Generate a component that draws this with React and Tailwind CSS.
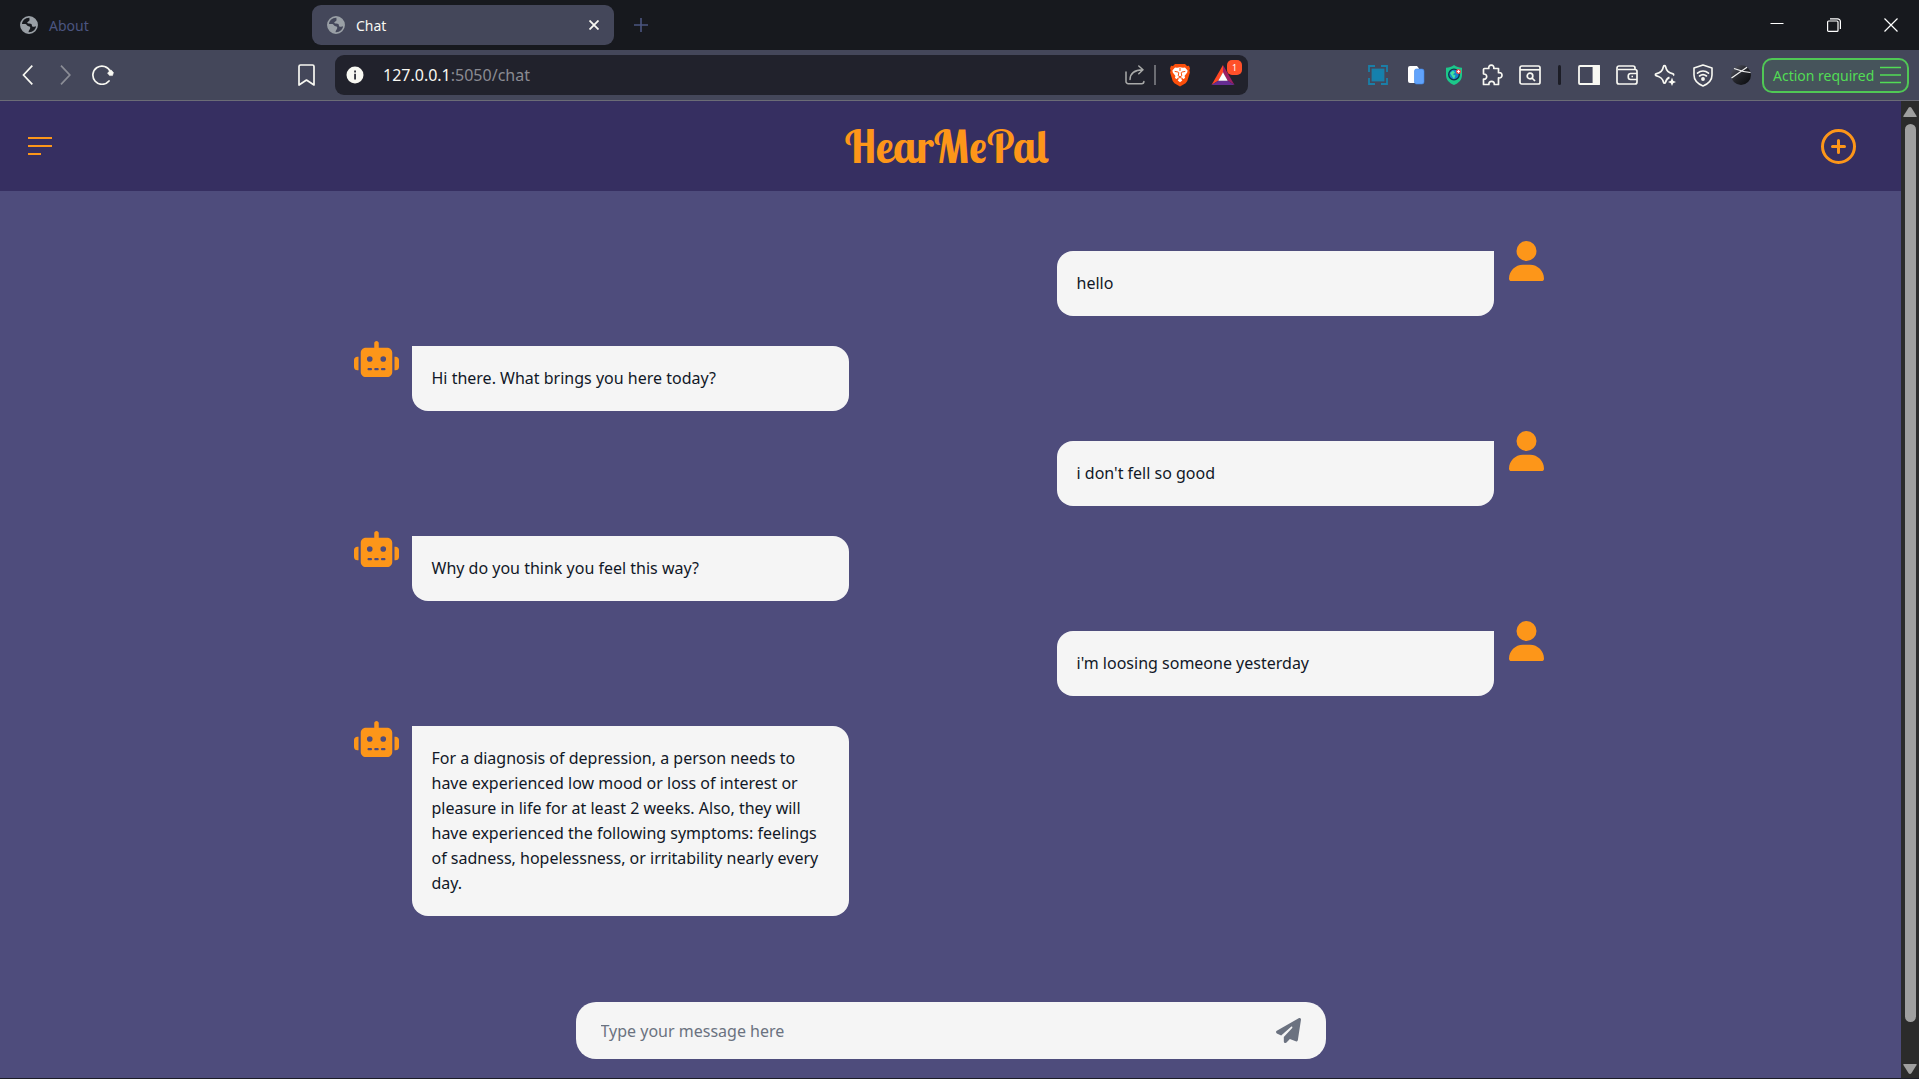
import React, { useState } from 'react';
import { FaUser, FaRobot, FaPaperPlane } from 'react-icons/fa6';

const initialMessages = [
    { id: 1, from: 'user', text: "hello" },
    { id: 2, from: 'bot', text: "Hi there. What brings you here today?" },
    { id: 3, from: 'user', text: "i don't fell so good" },
    { id: 4, from: 'bot', text: "Why do you think you feel this way?" },
    { id: 5, from: 'user', text: "i'm loosing someone yesterday" },
    {
        id: 6,
        from: 'bot',
        text: "For a diagnosis of depression, a person needs to have experienced low mood or loss of interest or pleasure in life for at least 2 weeks. Also, they will have experienced the following symptoms: feelings of sadness, hopelessness, or irritability nearly every day.",
    },
];

const GlobeIcon = () => (
    <svg viewBox="0 0 18 18" className="w-[18px] h-[18px] shrink-0">
        <circle cx="9" cy="9" r="8.100" fill="none" stroke="#9aa0a6" strokeWidth="1.700" />
        <path d="M10 1C8.500 3.300 10.500 3.600 9 5 6.800 6.300 6.500 7.500 9.300 7.600c2 .1 2.500.8 2.600 1.800.2 1.200 1 1.600 2.200 1.400L17 10A8.100 8.100 0 0 0 10 1z" fill="#9aa0a6" />
        <path d="M1 8h4.500c1.500.3 1.300 2 3 2.200 1.600.2 2.100 1 1.600 2.300-.5 1.400-1.600 1.700-1.600 4.500A8.200 8.200 0 0 1 1 8z" fill="#9aa0a6" />
    </svg>
);

const TabBar = () => (
    <div className="flex items-center h-[50px] bg-[#17191e]">
        <button className="flex items-center gap-[11px] w-[312px] h-[40px] pl-5 text-[14px] text-[#4b5580]">
            <GlobeIcon />
            About
        </button>
        <div className="flex items-center justify-between w-[302px] h-[40px] pl-[15px] pr-[11px] rounded-[9px] bg-[#44475a]">
            <button className="flex items-center gap-[11px] text-[14px] text-[#f8f8f2]">
                <GlobeIcon />
                Chat
            </button>
            <button aria-label="Close tab" className="p-1">
                <svg viewBox="0 0 10 10" className="w-[10px] h-[10px]" stroke="#f8f8f2" strokeWidth="1.800">
                    <path d="M.5.5l9 9M9.500.5l-9 9" />
                </svg>
            </button>
        </div>
        <button aria-label="New tab" className="ml-5">
            <svg viewBox="0 0 14 14" className="w-[14px] h-[14px]" stroke="#4b5580" strokeWidth="1.600">
                <path d="M7 0v14M0 7h14" />
            </svg>
        </button>
        <div className="flex items-center ml-auto pr-[21px] gap-[43px]">
            <button aria-label="Minimize">
                <svg viewBox="0 0 14 14" className="w-[14px] h-[14px]" fill="#fff"><path d="M.5 5h13v1H.5z" /></svg>
            </button>
            <button aria-label="Restore">
                <svg viewBox="0 0 14 14" className="w-[14px] h-[14px]" fill="none" stroke="#fff" strokeWidth="1.200">
                    <rect x=".6" y="3" width="10.400" height="10.400" rx="1" />
                    <path d="M3 .8h7.600a2.800 2.800 0 0 1 2.800 2.800V11" />
                </svg>
            </button>
            <button aria-label="Close">
                <svg viewBox="0 0 14 14" className="w-[14px] h-[14px]" stroke="#fff" strokeWidth="1.200">
                    <path d="M.5.5l13 13M13.500.5l-13 13" />
                </svg>
            </button>
        </div>
    </div>
);

const AddressBar = () => (
    <div className="flex flex-1 items-center h-[40px] ml-5 pl-[11px] pr-[13px] rounded-[9px] bg-[#21222c]">
        <svg viewBox="0 0 18 18" className="w-[18px] h-[18px] shrink-0">
            <circle cx="9" cy="9" r="8.500" fill="#f8f8f2" />
            <path d="M8.200 4.600h1.700v1.800H8.200zM8.200 7.700h1.700v5.700H8.200z" fill="#21222c" />
        </svg>
        <div className="flex-1 ml-[19px] text-[16px] text-[#8a8b92]">
            <span className="text-[#f8f8f2]">127.0.0.1</span>:5050/chat
        </div>
        <button aria-label="Share">
            <svg viewBox="0 0 20 20" className="w-5 h-5" fill="none" stroke="#a9aaa9" strokeWidth="1.500" strokeLinecap="round" strokeLinejoin="round">
                <path d="M1 7v9.500A2.200 2.200 0 0 0 3.200 18.700h13.500a2.200 2.200 0 0 0 2.200-2.200" />
                <path d="M5 14.500C5.200 8.500 9 5 17.800 4.800M13.800 1l4.200 3.800-4.200 3.900" />
            </svg>
        </button>
        <span className="w-[2px] h-5 ml-[9px] bg-[#6c6d73]" />
        <button aria-label="Brave Shields" className="ml-[13px]">
            <svg viewBox="0 0 22 24" className="w-[22px] h-6">
                <path d="M6 1h10l2 2 2-.2 1 2.700-.6 1.800.5 2.200-2.600 8.500-1.700 2.300L11 23.500l-5.600-3.200L3.700 18 1.100 9.500l.5-2.200L1 5.500l1-2.700 2 .2z" fill="#fb4f0b" />
                <path d="M11 4.200l3 .6 2-.4 2.600 3-.4 2.200-2.700 3.300.6 1.600-1.200 1.400-2-.5-.6.500 1 1.600-2.300 1.800-2.300-1.800 1-1.600-.6-.5-2 .5L5.900 14.500l.6-1.600-2.700-3.300-.4-2.200L6 4.400l2 .4z" fill="#fff" />
                <path d="M5.700 8.400l3.600.7.500.7-.6 3 1.800.9 1.800-.9-.6-3 .5-.7 3.600-.7M8.300 15.500l2.700-1 2.700 1M11 5v3" stroke="#fb4f0b" strokeWidth="1" fill="none" />
            </svg>
        </button>
        <button aria-label="Brave Rewards" className="relative ml-5">
            <svg viewBox="0 0 24 20" className="w-6 h-5">
                <path d="M12 0L.5 20 7.500 15.500 12 7.500z" fill="#ff4724" />
                <path d="M12 0l11.500 20-7-4.500-4.500-8z" fill="#9e1f63" />
                <path d="M.5 20l7-4.500h9l7 4.500z" fill="#662d91" />
                <path d="M12 7.300l4.700 8.500H7.300z" fill="#fff" />
            </svg>
            <span className="absolute -top-[5px] left-4 w-[15px] h-[15px] rounded-[5px] bg-[#ff5029] text-white text-[9px] leading-[15px] text-center">1</span>
        </button>
    </div>
);

const extensions = [
    {
        label: 'Capture',
        icon: (
            <svg viewBox="0 0 20 20" className="w-5 h-5" stroke="#1a7fa8" strokeWidth="1.800" fill="none">
                <path d="M1 7V1h6M13 1h6v6M19 13v6h-6M7 19H1v-6" />
                <rect x="4.500" y="4.500" width="11" height="11" fill="#1481ae" />
            </svg>
        ),
    },
    {
        label: 'Copy pages',
        icon: (
            <svg viewBox="0 0 18 20" className="w-[18px] h-5">
                <path d="M3 1h7l2 2.500V18H3a2 2 0 0 1-2-2V3a2 2 0 0 1 2-2z" fill="#fff" />
                <rect x="7.500" y="4" width="9.500" height="15" rx="2" fill="#61a3fb" stroke="#3e86e8" strokeWidth=".6" />
            </svg>
        ),
    },
    {
        label: 'Web shield',
        icon: (
            <svg viewBox="0 0 18 20" className="w-[18px] h-5">
                <path d="M9 0c2.500 2 5 2.700 8 2.800V10c0 5-3.500 8.200-8 10-4.500-1.800-8-5-8-10V2.800C4 2.700 6.500 2 9 0z" fill="#1cc88a" />
                <circle cx="9" cy="9.500" r="5.300" fill="#1585c9" stroke="#12324a" strokeWidth="1.300" />
                <path d="M5 8l3-2.500 2 2-2 2 2.500 1L9 14l-1.500-2z" fill="#43e0a0" />
                <circle cx="13.500" cy="6.500" r="2.500" fill="#ee4b50" />
                <path d="M13.500 5v3M12 6.500h3" stroke="#fff" strokeWidth=".9" />
            </svg>
        ),
    },
    {
        label: 'Extensions',
        icon: (
            <svg viewBox="0 0 22 22" className="w-[22px] h-[22px]" fill="none" stroke="#f8f8f2" strokeWidth="1.700" strokeLinejoin="round">
                <path d="M3.500 4.500h4.300c-.4-2.300.8-3.400 2.500-3.400s2.900 1.100 2.500 3.400h4.700v4.200c2.300-.4 3.500.9 3.500 2.600s-1.200 3-3.500 2.600V20.500h-4.200c.2-2-1-3.200-2.700-3.200s-2.900 1.200-2.700 3.200H2.500v-5.300c2 .2 3.200-1 3.200-2.600S4.500 9.800 2.500 10V5.500a1 1 0 0 1 1-1z" />
            </svg>
        ),
    },
    {
        label: 'Search page',
        icon: (
            <svg viewBox="0 0 22 20" className="w-[22px] h-5" fill="none" stroke="#f8f8f2" strokeWidth="1.700">
                <rect x="1" y="1" width="20" height="18" rx="1.800" />
                <path d="M1 4.800h20" />
                <circle cx="11" cy="11" r="2.800" />
                <path d="M13 13l3 3" />
            </svg>
        ),
    },
];

const browserTools = [
    {
        label: 'Sidebar',
        icon: (
            <svg viewBox="0 0 22 20" className="w-[22px] h-5" fill="none" stroke="#f8f8f2" strokeWidth="1.800">
                <rect x="1" y="1" width="20" height="18" rx="1" />
                <path d="M15.500 1h5.500v18h-5.500z" fill="#f8f8f2" />
            </svg>
        ),
    },
    {
        label: 'Wallet',
        icon: (
            <svg viewBox="0 0 22 20" className="w-[22px] h-5" fill="none" stroke="#f8f8f2" strokeWidth="1.700" strokeLinejoin="round">
                <path d="M19 4.500V3a2 2 0 0 0-2-2H3a2 2 0 0 0-2 2v14a2 2 0 0 0 2 2h16a2 2 0 0 0 2-2V6.500a2 2 0 0 0-2-2H2" />
                <path d="M21 8.500h-6.500A2.200 2.200 0 0 0 12.300 10.700v1.600a2.200 2.200 0 0 0 2.200 2.200H21M15.500 11.500h1.500" />
            </svg>
        ),
    },
    {
        label: 'Leo AI',
        icon: (
            <svg viewBox="0 0 22 22" className="w-[22px] h-[22px]" fill="none" stroke="#f8f8f2" strokeWidth="1.700" strokeLinejoin="round">
                <path d="M15.500 13.400c-2.500 1-3.300 2.100-4.100 5.100-.2.800-1.600.8-1.800 0C8.600 14.800 7.200 13 2 11.600c-.8-.2-.8-1.500 0-1.700C6.800 8.600 8.400 7 9.600 2.300c.2-.8 1.600-.8 1.800 0 1.200 4.700 2.800 6.300 7.600 7.600.8.200.8 1.200.2 1.600" />
                <path d="M18 13.500l1.200 3.300 2.800 1.200-2.800 1.200L18 22l-1.200-2.800L14 18l2.800-1.200z" fill="#f8f8f2" stroke="none" />
            </svg>
        ),
    },
    {
        label: 'VPN',
        icon: (
            <svg viewBox="0 0 20 23" className="w-5 h-[23px]" fill="none" stroke="#f8f8f2" strokeWidth="1.600" strokeLinecap="round" strokeLinejoin="round">
                <path d="M10 1l9 3v7c0 5-3.500 8.700-9 11-5.500-2.300-9-6-9-11V4z" />
                <path d="M4.500 9.200c3.300-2.800 7.700-2.800 11 0M6.500 12c2.200-1.700 4.800-1.700 7 0" />
                <circle cx="10" cy="15" r="1.100" fill="#f8f8f2" />
            </svg>
        ),
    },
    {
        label: 'Profile',
        icon: (
            <svg viewBox="0 0 20 20" className="w-5 h-5">
                <defs>
                    <linearGradient id="ball" x1="0" y1="0" x2="1" y2="1">
                        <stop offset="0" stopColor="#5a5c6b" />
                        <stop offset=".5" stopColor="#23242a" />
                        <stop offset="1" stopColor="#08090b" />
                    </linearGradient>
                </defs>
                <circle cx="10" cy="10" r="10" fill="url(#ball)" />
                <path d="M.5 13L16 2.200M3 3.500C8 5.500 14 7 19.500 7.500" stroke="#f1f1f1" strokeWidth="1.200" fill="none" />
            </svg>
        ),
    },
];

const ToolButton = ({ tool }) => (
    <button aria-label={tool.label} className="flex items-center justify-center w-[38px] h-[40px]">
        {tool.icon}
    </button>
);

const Toolbar = () => (
    <div className="flex items-center h-[51px] pl-[22px] pr-[10px] border-b border-[#6b6c76] bg-[#44475a]">
        <button aria-label="Back">
            <svg viewBox="0 0 12 20" className="w-3 h-5" fill="none" stroke="#f8f8f2" strokeWidth="1.700"><path d="M10.300.7L1.500 10l8.800 9.300" /></svg>
        </button>
        <button aria-label="Forward" className="ml-[26px]">
            <svg viewBox="0 0 12 20" className="w-3 h-5" fill="none" stroke="#8b8d96" strokeWidth="1.700"><path d="M1 .7l8.800 9.300L1 19.300" /></svg>
        </button>
        <button aria-label="Reload" className="ml-5">
            <svg viewBox="0 0 22 20" className="w-[22px] h-5" fill="none" stroke="#f8f8f2" strokeWidth="1.700">
                <path d="M17 16A9.100 9.100 0 1 1 18.300 6.500" strokeLinecap="round" />
                <path d="M19 4.800l2.500 2.800-1 3h-3l-2-2.600z" fill="#f8f8f2" stroke="#f8f8f2" strokeWidth=".5" />
            </svg>
        </button>
        <button aria-label="Bookmark" className="ml-[184px]">
            <svg viewBox="0 0 17 22" className="w-[17px] h-[22px]" fill="none" stroke="#f8f8f2" strokeWidth="1.700" strokeLinejoin="round">
                <path d="M1 2.500A1.500 1.500 0 0 1 2.500 1h12A1.500 1.500 0 0 1 16 2.500V21l-7.500-5L1 21z" />
            </svg>
        </button>
        <AddressBar />
        <div className="flex items-center ml-[111px]">
            {extensions.map((tool) => (
                <ToolButton key={tool.label} tool={tool} />
            ))}
            <span className="w-[3px] h-5 mx-[9px] rounded-sm bg-[#1c1d26]" />
            {browserTools.map((tool) => (
                <ToolButton key={tool.label} tool={tool} />
            ))}
            <button className="flex items-center justify-between w-[147px] h-[35px] ml-[2px] pl-[9px] pr-[6px] rounded-[10px] border-2 border-[#50c855] bg-[#46545b] text-[14px] text-[#52dc55] whitespace-nowrap">
                Action required
                <svg viewBox="0 0 21 18" className="w-[21px] h-[18px] shrink-0" stroke="#52dc55" strokeWidth="1.600"><path d="M0 1.500h21M0 9h21M0 16.500h21" /></svg>
            </button>
        </div>
    </div>
);

const Header = () => (
    <header className="flex items-center justify-between h-[90px] pl-7 pr-[45px] bg-[#362f61] text-[#fd9619]">
        <button aria-label="Menu" className="w-11">
            <svg viewBox="0 0 24 18" className="w-6 h-[18px]" stroke="currentColor" strokeWidth="2">
                <path d="M0 1h24M0 9h24M0 17h13" />
            </svg>
        </button>
        <h1 className="font-['Lobster_Two','Lobster','Liberation_Serif',serif] text-[45px] leading-[50px] font-bold">HearMePal</h1>
        <button aria-label="New chat">
            <svg viewBox="0 0 35 35" className="w-[35px] h-[35px]" fill="none" stroke="currentColor" strokeWidth="3" strokeLinecap="round">
                <circle cx="17.500" cy="17.500" r="16" />
                <path d="M17.500 11.500v12M11.500 17.500h12" />
            </svg>
        </button>
    </header>
);

const Message = ({ message }) => {
    if (message.from === 'user') {
        return (
            <div className="flex items-start justify-end gap-[15px]">
                <p className="w-[437px] mt-[10px] p-5 rounded-2xl rounded-tr-none bg-[#f5f5f5]">{message.text}</p>
                <FaUser className="w-[35px] h-[40px] shrink-0 text-[#fd9619]" />
            </div>
        );
    }

    return (
        <div className="flex items-start gap-[13px]">
            <FaRobot className="w-[45px] h-[36px] mt-[5px] shrink-0 text-[#fd9619]" />
            <p className="w-[437px] mt-[10px] p-5 rounded-2xl rounded-tl-none bg-[#f5f5f5]">{message.text}</p>
        </div>
    );
};

const Scrollbar = () => (
    <div className="flex flex-col items-center w-[18px] pt-[6px] pb-1 bg-[#2b2b2b]">
        <svg viewBox="0 0 14 10" className="w-[14px] h-[10px]" fill="#9f9f9f"><path d="M7 0c.6 0 1 .3 1.400.8L13.600 9c.3.500 0 1-.6 1H1c-.6 0-.9-.5-.6-1L5.600.8C6 .3 6.400 0 7 0z" /></svg>
        <div className="flex-1 w-[11px] mt-[7px] mb-[42px] rounded-full bg-[#9f9f9f]" />
        <svg viewBox="0 0 14 10" className="w-[14px] h-[10px]" fill="#9f9f9f"><path d="M7 10c.6 0 1-.3 1.400-.8L13.600 1c.3-.5 0-1-.6-1H1C.4 0 .1.5.4 1l5.200 8.200c.4.500.8.8 1.400.8z" /></svg>
    </div>
);

const App = () => {
    const [messages, setMessages] = useState(initialMessages);
    const [draft, setDraft] = useState('');

    const handleSend = (e) => {
        e.preventDefault();
        if (!draft.trim()) return;
        setMessages([...messages, { id: messages.length + 1, from: 'user', text: draft }]);
        setDraft('');
    };

    return (
        <div className="flex flex-col h-screen font-['Noto_Sans','Open_Sans',sans-serif] bg-[#17191e]">
            <TabBar />
            <Toolbar />
            <div className="flex flex-1 min-h-0 border-b border-[#1c1d26]">
                <div className="flex flex-col flex-1 min-w-0 bg-[#4e4c7c]">
                    <Header />
                    <main className="flex flex-col flex-1 min-h-0 gap-5 w-full max-w-[1194px] mx-auto pt-[50px] pr-1 overflow-hidden text-[16px] leading-[25px] text-[#111827]">
                        {messages.map((message) => (
                            <Message key={message.id} message={message} />
                        ))}
                    </main>
                    <form onSubmit={handleSend} className="flex items-center w-full max-w-[750px] h-[57px] mx-auto mb-[19px] px-[25px] rounded-[20px] bg-[#f5f5f5]">
                        <input
                            type="text"
                            aria-label="Message"
                            placeholder="Type your message here"
                            value={draft}
                            onChange={(e) => setDraft(e.target.value)}
                            className="flex-1 bg-transparent text-[16px] text-[#111827] placeholder:text-[#6b7280] outline-none"
                        />
                        <button type="submit" aria-label="Send">
                            <FaPaperPlane className="w-[25px] h-[25px] text-[#6b7280]" />
                        </button>
                    </form>
                </div>
                <Scrollbar />
            </div>
        </div>
    );
};

export default App;
